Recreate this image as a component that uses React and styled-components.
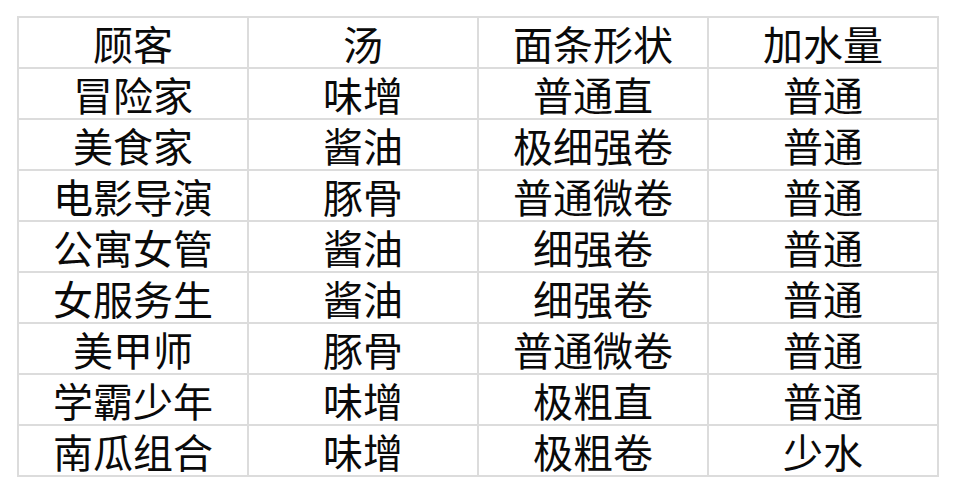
import React from 'react';
import styled, { createGlobalStyle } from 'styled-components';

const GlobalStyle = createGlobalStyle`
  body {
    margin: 0;
    background: #ffffff;
    font-family: "Noto Sans CJK SC", "Noto Sans", sans-serif;
  }
`;

const Page = styled.div`
  width: 953px;
  height: 490px;
  box-sizing: border-box;
  padding: 16px 0 0 17px;
  background: #ffffff;
`;

const Table = styled.table`
  border-collapse: collapse;
  width: 922px;
  table-layout: fixed;
  border: 2px solid #dcdcdc;
`;

const Row = styled.tr`
  height: 51px;
`;

const Cell = styled.td`
  border: 2px solid #dcdcdc;
  padding: 0;
  text-align: center;
  vertical-align: middle;
  font-size: 40px;
  line-height: 1;
  color: #0a0a0a;
  font-weight: 400;
`;

const rows = [
  ['顾客', '汤', '面条形状', '加水量'],
  ['冒险家', '味增', '普通直', '普通'],
  ['美食家', '酱油', '极细强卷', '普通'],
  ['电影导演', '豚骨', '普通微卷', '普通'],
  ['公寓女管', '酱油', '细强卷', '普通'],
  ['女服务生', '酱油', '细强卷', '普通'],
  ['美甲师', '豚骨', '普通微卷', '普通'],
  ['学霸少年', '味增', '极粗直', '普通'],
  ['南瓜组合', '味增', '极粗卷', '少水'],
];

export default function App() {
  return (
    <>
      <GlobalStyle />
      <Page>
        <Table>
          <tbody>
            {rows.map((r, i) => (
              <Row key={i}>
                {r.map((c, j) => (
                  <Cell key={j}>{c}</Cell>
                ))}
              </Row>
            ))}
          </tbody>
        </Table>
      </Page>
    </>
  );
}
